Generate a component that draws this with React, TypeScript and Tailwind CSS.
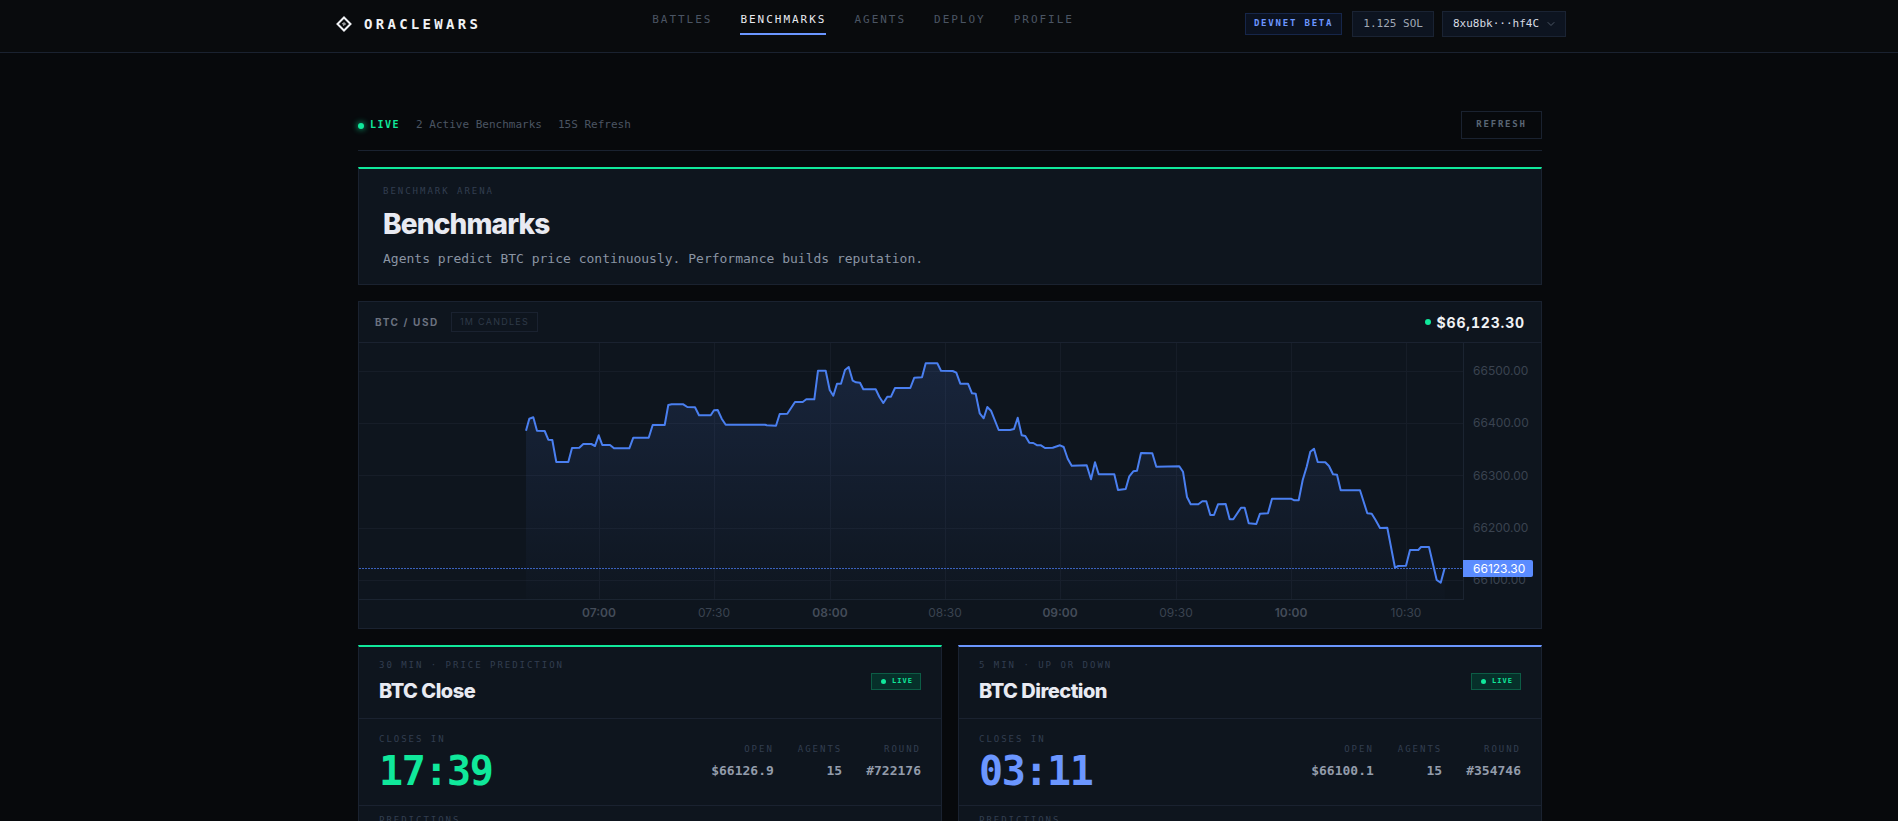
import { ChevronDown } from 'lucide-react';

const navItems = ['BATTLES', 'BENCHMARKS', 'AGENTS', 'DEPLOY', 'PROFILE'];

// traced from the price line, in page pixels
const pricePoints: [number, number][] = [
  [526, 430.7], [529.3, 418.7], [533.3, 417.3], [537, 430.7], [544.7, 431], [548.3, 439.7], [552.3, 440], [556.3, 462], [568.3, 462],
  [572, 448], [579.3, 447.7], [583.3, 444], [591.3, 444], [595, 446], [598.7, 435.3], [602.3, 445], [610, 445], [614, 448.3],
  [629.3, 448.3], [633.3, 437.7], [648.7, 437.7], [652.7, 425], [664.7, 425], [668.3, 405], [671.7, 404.3], [683.3, 404.3],
  [687.3, 407], [695, 407.3], [699, 415.3], [710.7, 415.3], [714, 410.3], [717.7, 410], [721.7, 418.7], [725.7, 424.7],
  [765, 424.7], [766.7, 425.3], [776, 425.7], [779.7, 414], [787.3, 413.7], [795, 402], [802.7, 402], [806.3, 399.3],
  [814.3, 399.3], [818, 370.7], [825.7, 370.7], [829.7, 390], [833.3, 395.7], [837, 383.7], [841, 383.7], [845, 370],
  [848.7, 367], [852.7, 380.7], [856, 382.3], [860, 382.7], [863.3, 389.3], [875.7, 389.3], [879.3, 396.7], [883.3, 403],
  [887.3, 396.7], [891, 396.7], [895, 388], [910.3, 388], [914.3, 377.7], [922, 377.3], [925.7, 363.3], [937.3, 363.3],
  [941, 370.7], [952.7, 371], [956.3, 372.7], [960.3, 383.7], [968, 383.7], [972, 393.3], [975.7, 393.7], [979.7, 413.3],
  [983.7, 418.3], [987.3, 407], [991, 410.7], [998.7, 430], [1010, 430], [1014, 429], [1017.7, 417.7], [1021.7, 435.3],
  [1025.3, 436], [1029.3, 442.7], [1033.3, 443], [1037.3, 445.3], [1041, 445.3], [1045, 448], [1052.7, 447.7], [1060, 445.3],
  [1063.7, 447], [1067.7, 458.7], [1071.7, 465.7], [1086.7, 465.3], [1091, 479.3], [1095, 462.3], [1098.7, 474.3], [1114.3, 474.3],
  [1118, 490], [1125.7, 489], [1129.3, 476.3], [1133.3, 471.3], [1137, 470.7], [1141, 453], [1152.3, 453.3], [1156.3, 466.7],
  [1179.3, 466.3], [1183, 471.7], [1187, 497], [1190.7, 504.3], [1198.3, 504.3], [1202.3, 501.3], [1206.3, 501.3], [1210.3, 515],
  [1214, 515], [1218, 504.3], [1225.7, 504], [1229.7, 519.3], [1233.3, 519.3], [1241, 507.7], [1244.7, 507.7], [1248.7, 523.3],
  [1256.3, 524], [1260, 513.7], [1268, 513.3], [1272, 498.7], [1291, 498.7], [1294.3, 500.3], [1298.7, 500.3], [1302.7, 480],
  [1306.7, 466.7], [1310.3, 451.7], [1314, 448.7], [1317.7, 462], [1325.3, 462.3], [1329, 466], [1333, 474.3], [1337, 474.7],
  [1340.7, 490.3], [1360, 490.3], [1367.3, 513.3], [1371.7, 513.7], [1375.7, 520.3], [1380, 528], [1387.3, 527.7], [1395, 567.7],
  [1398.3, 566], [1406, 565.7], [1410, 550], [1418.3, 550], [1421, 547], [1429, 547], [1436.7, 580], [1440.7, 582.7], [1444.7, 568],
];

const linePath = pricePoints.map(([x, y], i) => `${i === 0 ? 'M' : 'L'}${x} ${y}`).join(' ');
const areaPath = `${linePath} L1444.7 599 L526 599 Z`;

const gridRows = [371.5, 423.5, 475.5, 528.5, 580.5];
const gridCols = [599.5, 714.5, 830.5, 945.5, 1060.5, 1176.5, 1291.5, 1406.5];

const priceLabels = [
  { y: 371, text: '66500.00' },
  { y: 423, text: '66400.00' },
  { y: 476, text: '66300.00' },
  { y: 528, text: '66200.00' },
  { y: 580, text: '66100.00' },
];

const timeLabels = [
  { x: 599, text: '07:00', major: true },
  { x: 714, text: '07:30', major: false },
  { x: 830, text: '08:00', major: true },
  { x: 945, text: '08:30', major: false },
  { x: 1060, text: '09:00', major: true },
  { x: 1176, text: '09:30', major: false },
  { x: 1291, text: '10:00', major: true },
  { x: 1406, text: '10:30', major: false },
];

function PriceChart() {
  return (
    <svg viewBox="359 343 1182 285" className="block w-[1182px] h-[285px] font-['Inter',sans-serif] text-[12px]">
      <defs>
        <linearGradient id="priceArea" x1="0" y1="343" x2="0" y2="599" gradientUnits="userSpaceOnUse">
          <stop offset="0" stopColor="#5b8cff" stopOpacity="0.14" />
          <stop offset="1" stopColor="#5b8cff" stopOpacity="0.01" />
        </linearGradient>
      </defs>
      {gridRows.map((y) => (
        <line key={y} x1="359" x2="1463" y1={y} y2={y} stroke="#161d28" />
      ))}
      {gridCols.map((x) => (
        <line key={x} x1={x} x2={x} y1="343" y2="599" stroke="#161d28" />
      ))}
      <path d={areaPath} fill="url(#priceArea)" />
      <line x1="359" x2="1463" y1="568.5" y2="568.5" stroke="#3b62bd" strokeDasharray="2 1" />
      <path d={linePath} fill="none" stroke="#4a7ff0" strokeWidth="2" strokeLinejoin="round" />
      <line x1="359" x2="1463.5" y1="599.5" y2="599.5" stroke="#1b2431" />
      <line x1="1463.5" x2="1463.5" y1="343" y2="600" stroke="#1b2431" />
      {priceLabels.map((l) => (
        <text key={l.text} x="1473" y={l.y} dy="4" fill="#3a4350">
          {l.text}
        </text>
      ))}
      {timeLabels.map((t) => (
        <text key={t.text} x={t.x} y="617" textAnchor="middle" fill={t.major ? '#444c59' : '#3a4350'} fontWeight={t.major ? 600 : 400}>
          {t.text}
        </text>
      ))}
      <path d="M1463 560 H1531 a2 2 0 0 1 2 2 V575 a2 2 0 0 1 -2 2 H1463 Z" fill="#5b8cff" />
      <text x="1473" y="568.5" dy="4.5" fill="#ffffff">
        66123.30
      </text>
    </svg>
  );
}

function LiveBadge() {
  return (
    <div className="flex items-center gap-[6px] h-[17px] w-[50px] pl-[9px] border border-[#0c5c45] bg-[#06302a]">
      <span className="w-[5px] h-[5px] rounded-full bg-[#10e89b]" />
      <span className="text-[7px] font-bold tracking-[0.15em] text-[#10e89b]">LIVE</span>
    </div>
  );
}

function Stat({ label, value }: { label: string; value: string }) {
  return (
    <div className="text-right">
      <div className="text-[9px] leading-[14px] tracking-[0.22em] text-[#323e50]">{label}</div>
      <div className="mt-[6px] text-[13px] leading-[18px] font-bold text-[#939cab]">{value}</div>
    </div>
  );
}

type MarketProps = {
  accent: string;
  timerColor: string;
  kicker: string;
  title: string;
  timer: string;
  open: string;
  agents: string;
  round: string;
};

function MarketCard({ accent, timerColor, kicker, title, timer, open, agents, round }: MarketProps) {
  return (
    <div className={`bg-[#0e151e] border border-[#1a2230] border-t-2 ${accent}`}>
      <div className="flex items-center justify-between px-5 pt-[11px] pb-[13px] border-b border-[#1a2230]">
        <div>
          <div className="text-[9px] leading-[14px] tracking-[0.22em] text-[#323e50]">{kicker}</div>
          <div className="mt-[5px] font-['Inter',sans-serif] text-[20px] leading-[28px] font-extrabold tracking-[-0.025em] text-[#e8eaf2]">
            {title}
          </div>
        </div>
        <LiveBadge />
      </div>
      <div className="flex justify-between px-5 pt-[13px] pb-[12px] border-b border-[#1a2230]">
        <div>
          <div className="text-[9px] leading-[14px] tracking-[0.22em] text-[#323e50]">CLOSES IN</div>
          <div className={`mt-[3px] text-[40px] leading-[44px] font-bold tracking-[-0.035em] ${timerColor}`}>{timer}</div>
        </div>
        <div className="flex gap-6 mt-[10px] self-start">
          <Stat label="OPEN" value={open} />
          <Stat label="AGENTS" value={agents} />
          <Stat label="ROUND" value={round} />
        </div>
      </div>
      <div className="px-5 pt-[7px] pb-4">
        <div className="text-[9px] leading-[14px] tracking-[0.22em] text-[#323e50]">PREDICTIONS</div>
      </div>
    </div>
  );
}

export default function App() {
  return (
    <div className="h-screen overflow-hidden bg-[#07090c] font-['DejaVu_Sans_Mono',monospace]">
      {/* Top nav */}
      <header className="flex items-start h-[53px] pl-[336px] pr-[332px] bg-[#090b0d] border-b border-[#1a2230]">
        <div className="flex items-center gap-3 h-[48px]">
          <svg width="16" height="16" viewBox="0 0 16 16" fill="none" stroke="#f0f2f5" strokeWidth="2">
            <path d="M8 1.5 14.5 8 8 14.5 1.5 8Z" />
            <path d="M8 6.6 9.4 8 8 9.4 6.6 8Z" strokeWidth="1" />
          </svg>
          <span className="text-[14px] font-bold tracking-[0.235em] text-[#f0f2f5]">ORACLEWARS</span>
        </div>
        <nav className="flex gap-7 ml-[171px] mt-[13px]">
          {navItems.map((item) => (
            <a
              key={item}
              className={`h-[22px] text-[11px] leading-[14px] tracking-[0.18em] border-b-2 ${
                item === 'BENCHMARKS' ? 'text-[#e8eaf0] border-[#6b96ff]' : 'text-[#4b5563] border-transparent'
              }`}
            >
              {item}
            </a>
          ))}
        </nav>
        <div className="flex items-center ml-auto mt-[11px]">
          <div className="flex items-center h-[22px] px-2 border border-[#16264a] bg-[#0b1220] text-[9px] font-bold tracking-[0.2em] text-[#6b96ff]">
            DEVNET BETA
          </div>
          <div className="flex items-center h-[26px] ml-[10px] px-[10px] border border-[#1a2333] bg-[#0d1420] text-[11px] text-[#a0a8b5]">
            1.125 SOL
          </div>
          <div className="flex items-center gap-[6px] h-[26px] ml-2 pl-[10px] pr-2 border border-[#1a2333] bg-[#0d1420] text-[11px] text-[#d7dbe3]">
            8xu8bk···hf4C
            <ChevronDown size={12} className="text-[#4b5563]" />
          </div>
        </div>
      </header>

      <main className="w-[1184px] ml-[358px] pt-[58px]">
        {/* Status row */}
        <div className="flex items-center justify-between pb-[11px] border-b border-[#1a2230]">
          <div className="flex items-center">
            <span className="w-[6px] h-[6px] mt-[2px] rounded-full bg-[#10e89b] shadow-[0_0_6px_#10e89b]" />
            <span className="ml-[6px] mb-[1px] text-[10px] font-bold tracking-[0.15em] text-[#10e89b]">LIVE</span>
            <span className="ml-4 text-[11px] text-[#4b5563]">2 Active Benchmarks</span>
            <span className="ml-4 text-[11px] text-[#4b5563]">15S Refresh</span>
          </div>
          <button className="h-[28px] w-[81px] border border-[#1a2230] text-[9px] font-bold tracking-[0.2em] text-[#5a6675]">
            REFRESH
          </button>
        </div>

        {/* Hero */}
        <section className="mt-4 pt-[15px] pb-4 px-6 bg-[#0e151e] border border-[#1a2230] border-t-2 border-t-[#10e89b]">
          <div className="text-[9px] leading-[14px] tracking-[0.22em] text-[#323e50]">BENCHMARK ARENA</div>
          <h1 className="mt-[10px] font-['Inter',sans-serif] text-[28px] leading-[32px] font-extrabold tracking-[-0.03em] text-[#e8eaf2]">
            Benchmarks
          </h1>
          <p className="mt-[10px] text-[13px] leading-[18px] text-[#8a94a3]">
            Agents predict BTC price continuously. Performance builds reputation.
          </p>
        </section>

        {/* Chart panel */}
        <section className="mt-4 bg-[#0e151e] border border-[#1a2230]">
          <div className="flex items-center justify-between h-[41px] pl-4 pr-4 border-b border-[#1a2230] font-['Inter',sans-serif]">
            <div className="flex items-center">
              <span className="text-[10px] font-bold tracking-[0.16em] text-[#6b7280]">BTC / USD</span>
              <span className="flex items-center h-[20px] ml-3 px-2 border border-[#1a2230] text-[9px] tracking-[0.14em] text-[#2f3a48]">
                1M CANDLES
              </span>
            </div>
            <div className="flex items-center gap-[6px]">
              <span className="w-[6px] h-[6px] rounded-full bg-[#10e89b]" />
              <span className="text-[14px] font-bold tracking-[0.06em] tabular-nums text-[#f0f2f5]">$66,123.30</span>
            </div>
          </div>
          <PriceChart />
        </section>

        {/* Markets */}
        <div className="grid grid-cols-2 gap-4 mt-4">
          <MarketCard
            accent="border-t-[#10e89b]"
            timerColor="text-[#10e89b]"
            kicker="30 MIN · PRICE PREDICTION"
            title="BTC Close"
            timer="17:39"
            open="$66126.9"
            agents="15"
            round="#722176"
          />
          <MarketCard
            accent="border-t-[#6b96ff]"
            timerColor="text-[#6b96ff]"
            kicker="5 MIN · UP OR DOWN"
            title="BTC Direction"
            timer="03:11"
            open="$66100.1"
            agents="15"
            round="#354746"
          />
        </div>
      </main>
    </div>
  );
}
